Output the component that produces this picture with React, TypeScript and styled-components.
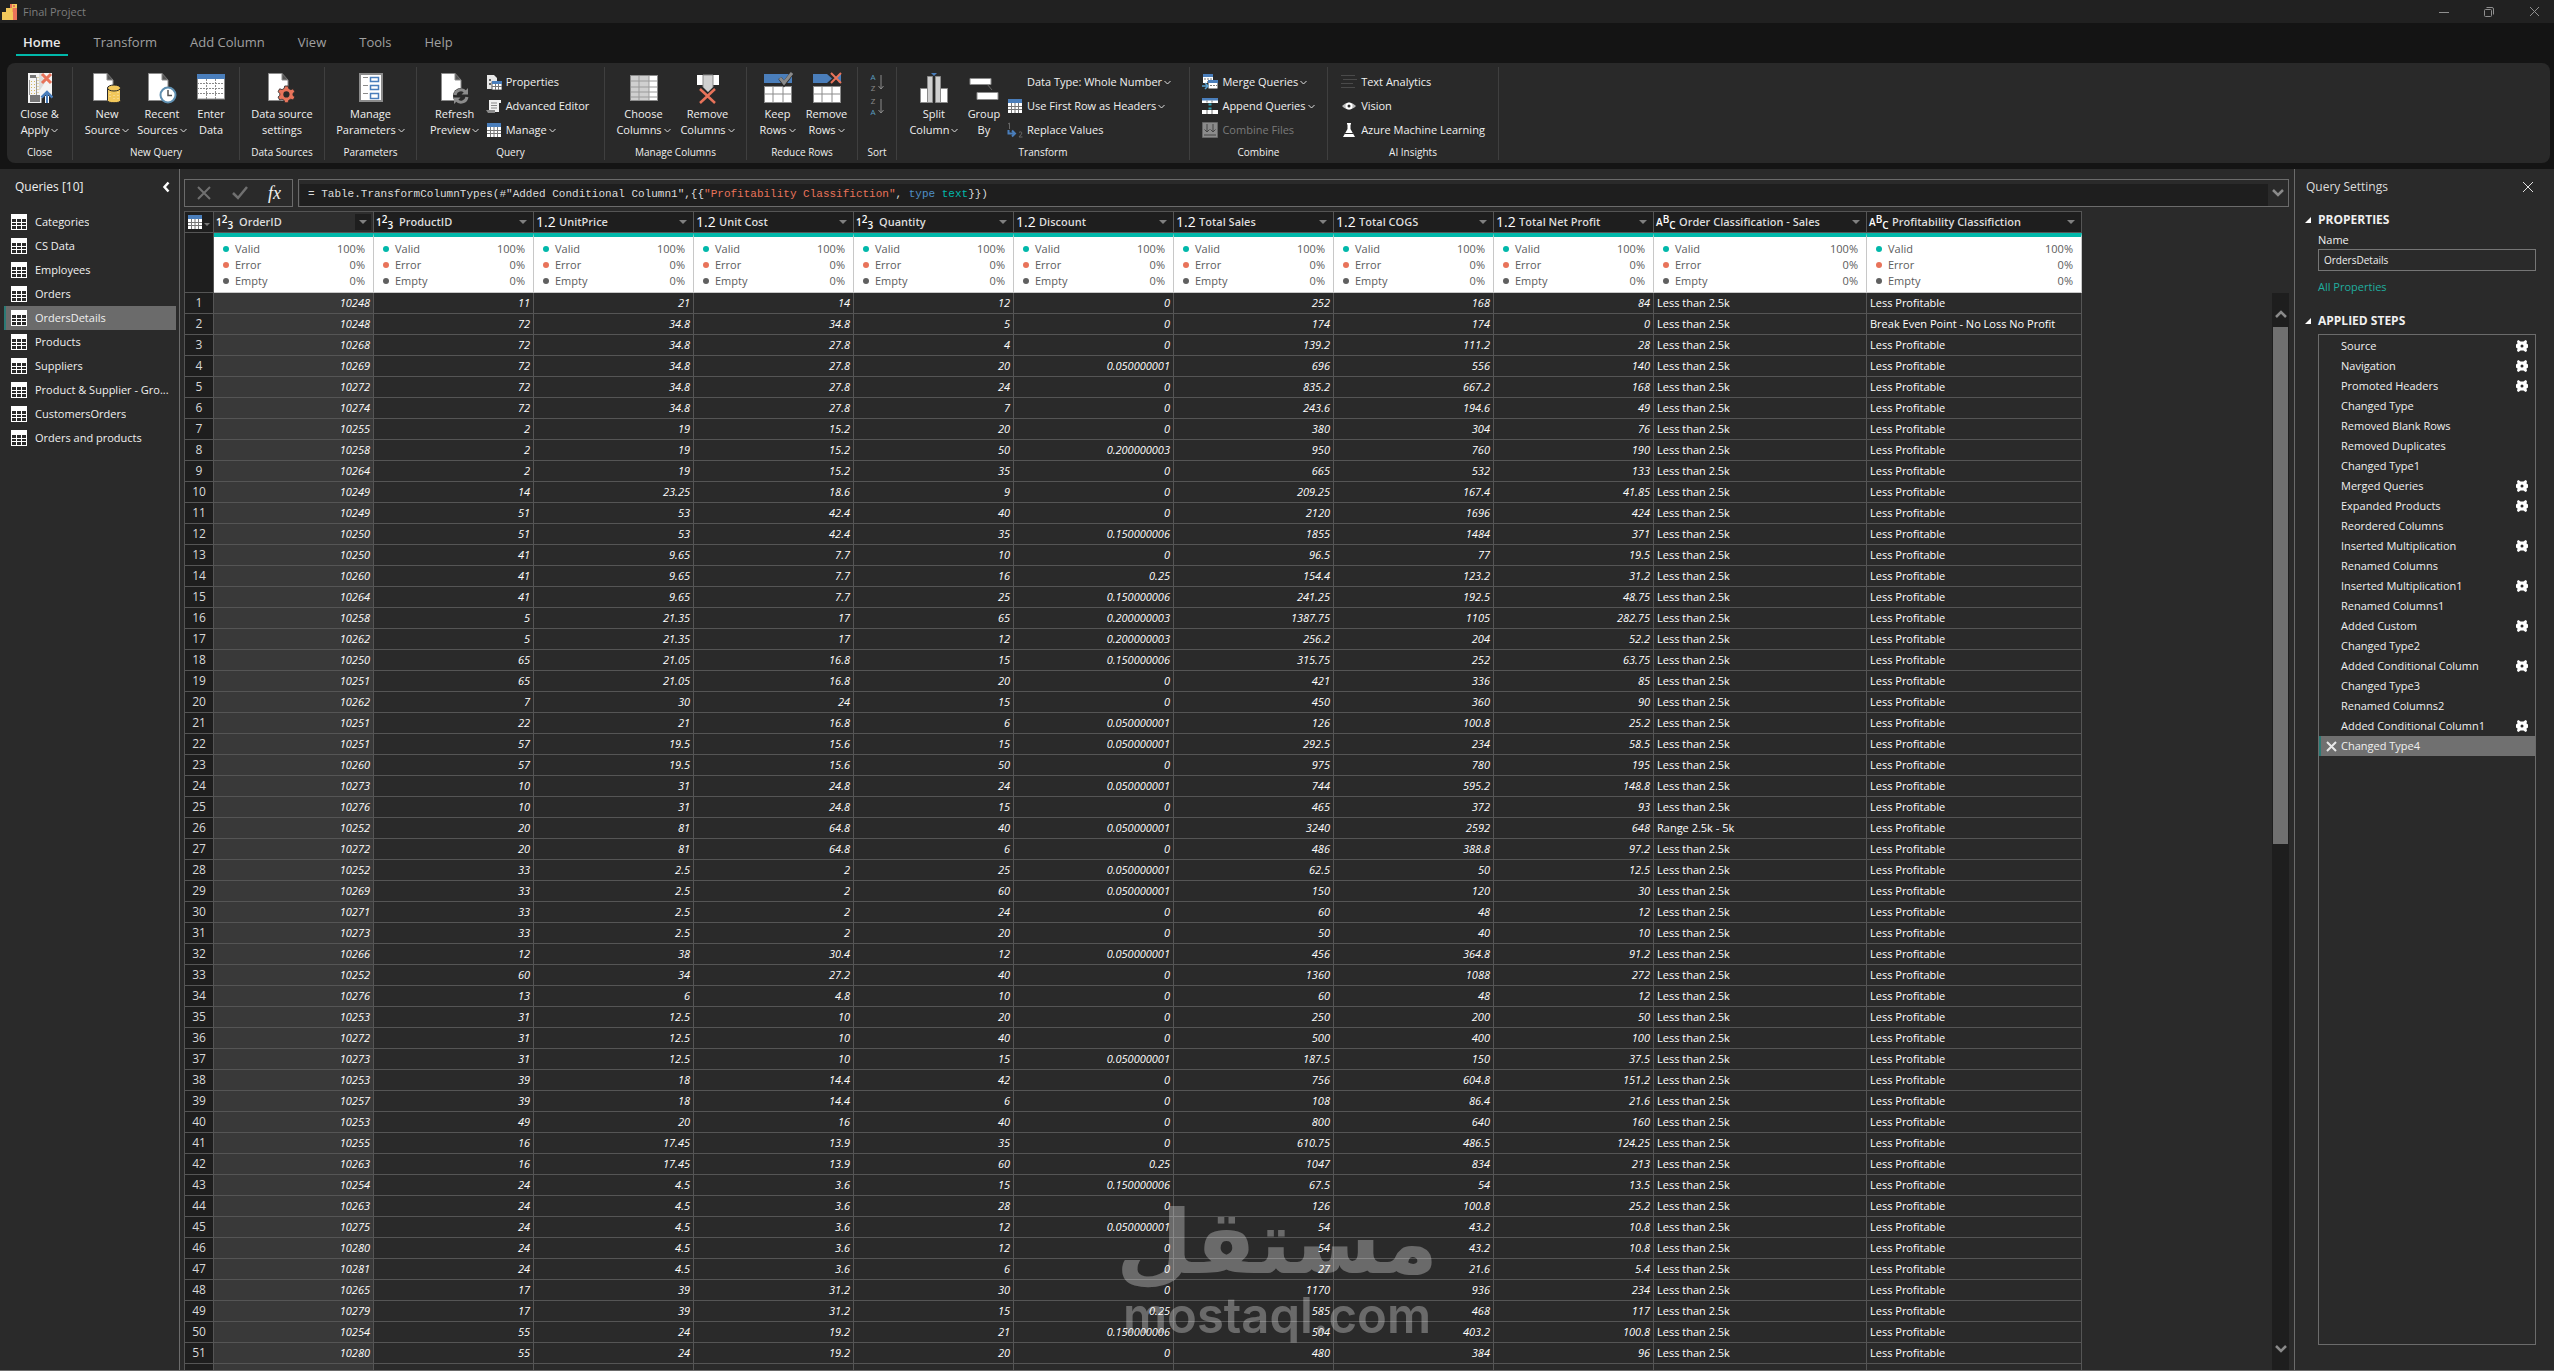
import React from "react";
import styled, { createGlobalStyle } from "styled-components";

const c = {
  title: "#212121",
  strip: "#141414",
  panel: "#2a2a2a",
  dark: "#1e1e1e",
  line: "#555555",
  edge: "#6b6b6b",
  picked: "#6b6b6b",
  teal: "#01b8aa",
  blue: "#4a7ebb",
  red: "#e8735a",
  gold: "#f2c85b",
  text: "#f0f0f0",
};

const Global = createGlobalStyle`
  * { box-sizing: border-box; }
  body { margin: 0; background: ${c.panel}; color: ${c.text}; font: 12px/16px "Open Sans", "Noto Sans", sans-serif; }
  button { font: inherit; color: inherit; background: none; border: 0; padding: 0; margin: 0; }
  input { font: inherit; color: inherit; }
  ul, ol { list-style: none; margin: 0; padding: 0; }
  svg { display: block; flex: none; }
`;

/* ---------- frame ---------- */

const Shell = styled.div`
  height: 100vh;
  display: flex;
  flex-direction: column;
  overflow: hidden;
  position: relative;
`;
const TitleBar = styled.header`
  height: 23px;
  background: ${c.title};
  color: #7d7d7d;
  display: flex;
  align-items: center;
  padding: 0 14px 0 2px;
  gap: 6px;
`;
const TitleText = styled.span`
  flex: 1;
  font-size: 11px;
`;
const WindowButtons = styled.div`
  display: flex;
  gap: 35px;
`;
const Tabs = styled.nav`
  background: ${c.strip};
  height: 40px;
  padding: 6px 16px 0;
  display: flex;
  align-items: flex-start;
  gap: 19px;
`;
const Tab = styled.button<{ $on?: boolean }>`
  height: 25px;
  padding: 0 7px;
  font-size: 13px;
  line-height: 26px;
  color: ${(p) => (p.$on ? "#e8e8e8" : "#a0a0a0")};
  font-weight: ${(p) => (p.$on ? 600 : 400)};
  box-shadow: ${(p) => (p.$on ? `0 2px 0 ${c.teal}` : "none")};
`;
const RibbonBack = styled.div`
  background: ${c.strip};
  padding: 0 4px 6px 7px;
`;
const Ribbon = styled.div`
  height: 100px;
  background: #292929;
  border-radius: 8px;
  display: flex;
  padding: 4px 0 3px;
`;
const Group = styled.section<{ $w: number }>`
  width: ${(p) => p.$w}px;
  border-right: 1px solid #3f3f3f;
  display: flex;
  flex-direction: column;
  justify-content: space-between;
`;
const GroupTools = styled.div<{ $mixed?: boolean }>`
  display: flex;
  justify-content: center;
  align-items: flex-start;
  padding-top: 3px;
  padding-right: ${(p) => (p.$mixed ? 8 : 0)}px;
`;
const GroupName = styled.div`
  text-align: center;
  font-size: 10px;
  line-height: 16px;
`;
const Big = styled.button<{ $w: number }>`
  width: ${(p) => p.$w}px;
  display: flex;
  flex-direction: column;
  align-items: center;
  font-size: 11px;
  line-height: 16px;
  white-space: nowrap;
`;
const BigIcon = styled.span`
  height: 36px;
  display: flex;
  align-items: center;
`;
const BigLine = styled.span`
  display: flex;
  align-items: center;
  gap: 2px;
`;
const SmallList = styled.div`
  display: flex;
  flex-direction: column;
`;
const Small = styled.button<{ $off?: boolean }>`
  height: 24px;
  display: flex;
  align-items: center;
  gap: 2px;
  font-size: 11px;
  white-space: nowrap;
  color: ${(p) => (p.$off ? "#7a7a7a" : c.text)};
`;
const SmallIcon = styled.span`
  width: 16px;
  margin-right: 2px;
  display: flex;
  justify-content: center;
`;
const SortMark = styled.span`
  display: flex;
  align-items: center;
  gap: 2px;
`;
const SortLetters = styled.span`
  display: flex;
  flex-direction: column;
  font-size: 8px;
  line-height: 11px;
`;

const Body = styled.div`
  flex: 1;
  min-height: 0;
  display: grid;
  grid-template-columns: 180px minmax(0, 1fr) 260px;
  border-bottom: 1px solid ${c.edge};
`;

/* ---------- queries pane ---------- */

const Queries = styled.aside`
  border-right: 1px solid ${c.edge};
`;
const QueriesHead = styled.div`
  height: 36px;
  padding: 0 9px 0 15px;
  display: flex;
  align-items: center;
  justify-content: space-between;
  font-size: 12px;
`;
const QueryList = styled.ul`
  padding: 5px 3px 0 4px;
`;
const QueryRow = styled.button<{ $on?: boolean }>`
  width: 100%;
  height: 24px;
  display: flex;
  align-items: center;
  gap: 8px;
  padding: 0 0 0 5px;
  border-left: 2px solid ${(p) => (p.$on ? "#2b7a75" : "transparent")};
  background: ${(p) => (p.$on ? c.picked : "transparent")};
  font-size: 11px;
  text-align: left;
`;
const QueryName = styled.span`
  overflow: hidden;
  white-space: nowrap;
  text-overflow: ellipsis;
`;

/* ---------- centre ---------- */

const Main = styled.main`
  min-height: 0;
  display: flex;
  flex-direction: column;
  padding: 10px 5px 0 4px;
`;
const FormulaRow = styled.div`
  display: flex;
  gap: 5px;
  height: 28px;
`;
const FormulaTools = styled.div`
  width: 109px;
  border: 1px solid ${c.edge};
  display: flex;
  align-items: center;
  justify-content: space-between;
  padding: 0 11px 0 12px;
`;
const Fx = styled.button`
  font: italic 18px/20px "Liberation Serif", serif;
`;
const FormulaBox = styled.div`
  flex: 1;
  min-width: 0;
  border: 1px solid ${c.edge};
  padding: 4px 0 0 1px;
  display: flex;
`;
const Formula = styled.div`
  flex: 1;
  background: ${c.dark};
  padding: 0 8px;
  font: 11px/20px "Liberation Mono", monospace;
  color: #dcdcdc;
  white-space: pre;
  overflow: hidden;
`;
const Tok = styled.span<{ $c: string }>`
  color: ${(p) => p.$c};
`;
const FormulaDrop = styled.button`
  width: 20px;
  height: 18px;
  display: flex;
  align-items: center;
  justify-content: center;
`;
const GridArea = styled.div`
  flex: 1;
  min-height: 0;
  margin-top: 4px;
  display: flex;
`;
const GridClip = styled.div`
  flex: 1;
  min-width: 0;
  overflow: hidden;
`;
const Table = styled.table`
  table-layout: fixed;
  border-collapse: separate;
  border-spacing: 0;
  width: 1898px;
  border-left: 1px solid ${c.line};
`;
const HeadCell = styled.th<{ $on?: boolean }>`
  height: 22px;
  padding: 0 2px;
  border: solid ${c.line};
  border-width: 1px 1px 1px 0;
  background: ${(p) => (p.$on ? "#2e2e2e" : c.dark)};
  text-align: left;
  font-size: 11px;
  font-weight: 600;
  line-height: 16px;
  overflow: hidden;
`;
const HeadFlex = styled.div`
  display: flex;
  align-items: center;
`;
const TypeMark = styled.span`
  width: 23px;
  height: 18px;
  display: flex;
  align-items: center;
  font-size: 10px;
  line-height: 12px;
  color: #ffffff;
`;
const TypeNum = styled(TypeMark)`
  font-size: 14px;
  font-weight: 400;
`;
const Up = styled.span`
  align-self: flex-start;
`;
const Down = styled.span`
  align-self: flex-end;
`;
const HeadName = styled.span`
  flex: 1;
  white-space: nowrap;
  color: #dcdcdc;
`;
const HeadDrop = styled.button<{ $on?: boolean }>`
  width: 16px;
  height: 16px;
  display: flex;
  align-items: center;
  justify-content: center;
  background: ${(p) => (p.$on ? c.dark : "transparent")};
`;
const Corner = styled.td`
  background: ${c.dark};
  border-right: 1px solid ${c.line};
  border-bottom: 1px solid ${c.line};
`;
const QualityCell = styled.td`
  height: 60px;
  padding: 4px 8px 0 9px;
  background: #ffffff;
  border-top: 4px solid ${c.teal};
  border-right: 1px solid #c8c8c8;
  border-bottom: 1px solid #c8c8c8;
  color: #5c5c5c;
  font-size: 11px;
  line-height: 16px;
  vertical-align: top;
`;
const QualityLine = styled.div`
  display: flex;
  align-items: center;
  gap: 6px;
`;
const Dot = styled.i<{ $c: string }>`
  width: 6px;
  height: 6px;
  border-radius: 3px;
  background: ${(p) => p.$c};
`;
const Grow = styled.span`
  flex: 1;
`;
const RowNo = styled.th`
  height: 21px;
  padding: 0;
  background: ${c.dark};
  border-right: 1px solid ${c.line};
  border-bottom: 1px solid ${c.line};
  font-size: 12px;
  line-height: 20px;
  font-weight: 400;
  color: #d8d8d8;
  text-align: center;
`;
const Cell = styled.td<{ $num?: boolean; $on?: boolean }>`
  height: 21px;
  padding: 0 3px;
  border-right: 1px solid ${c.line};
  border-bottom: 1px solid ${c.line};
  background: ${(p) => (p.$on ? "#393939" : "transparent")};
  font-size: 11px;
  line-height: 20px;
  font-style: ${(p) => (p.$num ? "italic" : "normal")};
  text-align: ${(p) => (p.$num ? "right" : "left")};
  color: #ffffff;
  white-space: nowrap;
`;
const ScrollTrack = styled.div`
  width: 17px;
  margin-top: 82px;
  background: ${c.dark};
  display: flex;
  flex-direction: column;
  align-items: center;
`;
const ScrollEnd = styled.button<{ $down?: boolean }>`
  height: 34px;
  padding: ${(p) => (p.$down ? "0 0 8px" : "8px 0 0")};
  display: flex;
  align-items: center;
`;
const ScrollThumb = styled.div`
  width: 15px;
  flex: 516;
  background: #707070;
`;
const ScrollRest = styled.div`
  flex: 492;
`;

/* ---------- settings pane ---------- */

const Settings = styled.aside`
  border-left: 1px solid ${c.edge};
  padding: 0 18px 25px 10px;
  display: flex;
  flex-direction: column;
`;
const SettingsHead = styled.div`
  height: 36px;
  display: flex;
  align-items: center;
  justify-content: space-between;
  padding: 0 2px 0 1px;
  font-size: 12px;
  color: #dcdcdc;
`;
const SectionHead = styled.h2`
  margin: 7px 0 0;
  height: 16px;
  display: flex;
  align-items: center;
  gap: 7px;
  font-size: 12px;
  font-weight: 700;
`;
const Inset = styled.div`
  padding-left: 13px;
  padding-top: 4px;
  display: flex;
  flex-direction: column;
  align-items: flex-start;
`;
const FieldLabel = styled.label`
  font-size: 11px;
  line-height: 16px;
  margin-bottom: 1px;
`;
const NameInput = styled.input`
  width: 100%;
  height: 22px;
  background: transparent;
  border: 1px solid #757575;
  border-radius: 0;
  padding: 0 5px;
  font-size: 10px;
`;
const AllLink = styled.a`
  margin: 8px 0 11px;
  font-size: 11px;
  line-height: 16px;
  color: #1fae9f;
  text-decoration: none;
`;
const Steps = styled.ol`
  flex: 1;
  margin: 5px 0 0 13px;
  border: 1px solid ${c.edge};
  padding-top: 1px;
`;
const Step = styled.li<{ $on?: boolean }>`
  height: 20px;
  display: flex;
  align-items: center;
  padding-right: 7px;
  border-left: 2px solid ${(p) => (p.$on ? "#2b7a75" : "transparent")};
  background: ${(p) => (p.$on ? "#707070" : "transparent")};
`;
const StepMark = styled.button`
  width: 20px;
  display: flex;
  justify-content: center;
`;
const StepName = styled.button`
  flex: 1;
  text-align: left;
  font-size: 11px;
  line-height: 20px;
`;

/* ---------- watermark ---------- */

const Watermark = styled.div`
  position: absolute;
  left: 0;
  right: 0;
  bottom: 30px;
  display: flex;
  flex-direction: column;
  align-items: center;
  opacity: 0.3;
  color: #ffffff;
  pointer-events: none;
`;
const MarkArabic = styled.div`
  font: bold 88px/96px "DejaVu Sans", sans-serif;
`;
const MarkLatin = styled.div`
  font: 600 49px/50px "Inter", sans-serif;
`;

/* ---------- drawings ---------- */

const Chevron = () => (
  <svg width="7" height="5" viewBox="0 0 7 5" fill="none" stroke="#e0e0e0">
    <path d="M.5 1l3 3 3-3" />
  </svg>
);
const Fat = ({ d, w = 12, h = 8, s = "#8a8a8a" }: { d: string; w?: number; h?: number; s?: string }) => (
  <svg width={w} height={h} viewBox={`0 0 ${w} ${h}`} fill="none" stroke={s} strokeWidth="2.5">
    <path d={d} />
  </svg>
);
const Logo = () => (
  <svg width="15" height="16" viewBox="0 0 15 16">
    <rect x="8" y="0" width="7" height="16" fill={c.red} />
    <rect x="4" y="4" width="7" height="12" fill="#f0a94e" />
    <rect x="0" y="8" width="11" height="8" fill={c.gold} />
    <rect x="4" y="4" width="6" height="8" fill={c.gold} />
    <rect x="10" y="0" width="5" height="4" fill={c.gold} />
    <rect x="11" y="1" width="2" height="2" fill={c.red} />
  </svg>
);
const Doc = () => <path d="M1.5 1.5H15l6 6.500V28.500H1.500z" fill="#fff" stroke="#8b8b8b" />;
const Fold = () => <path d="M15 1.500V8h6" fill="#555" stroke="#8b8b8b" />;
const B = ({ children, w = 30 }: { children: React.ReactNode; w?: number }) => (
  <svg width={w} height="32" viewBox={`0 0 ${w} 32`} fill="none">
    {children}
  </svg>
);
const lines = (xs: number[], ys: number[], x0: number, x1: number, y0: number, y1: number, s = "#8b8b8b") => (
  <path
    stroke={s}
    d={xs.map((x) => `M${x} ${y0}V${y1}`).join("") + ys.map((y) => `M${x0} ${y}H${x1}`).join("")}
  />
);
const gearPath =
  "M4.800 0h2.400l.4 1.700 1.500.9 1.700-.6 1.200 2.100-1.300 1.200v1.400l1.300 1.200-1.200 2.100-1.700-.6-1.500.9-.4 1.700H4.800l-.4-1.700-1.500-.9-1.700.6L0 7.900l1.300-1.200V5.300L0 4.100 1.200 2l1.700.6 1.500-.9z";
const starGearPath = "M2.500 0l2 1.500h3L9.500 0l1.500 1-.5 2.500L12 4.500v3l-1.500 1 .5 2.500-1.500 1-2-1.500h-3L2.500 12 1 11l.5-2.500L0 7.500v-3l1.500-1L1 1z";

const BigIcons: Record<string, React.ReactNode> = {
  close: (
    <B w={26}>
      <rect x="1" y="1" width="24" height="30" fill="#f4f4f4" />
      <path d="M12 1h3v4l4 4-6 9h-1z" fill="#dcdcdc" />
      <path d="M4.500 9v14M7.500 9v14M11 5v18" stroke="#d4b95e" strokeDasharray="1 2" />
      <path d="M2.500 8v15M9.500 5v18" stroke="#9a9a9a" />
      <rect x="3" y="3" width="6" height="3" fill="#777" />
      <rect x="3" y="23" width="10" height="7" fill="#777" />
      <path d="M15 2l9 9M24 2l-9 9" stroke={c.red} strokeWidth="3" />
      <path d="M14.500 26v5h11v-5L20 20z" fill="#292929" />
      <path d="M14.500 25.500L20 20l5.500 5.500" stroke={c.blue} strokeWidth="2.500" />
      <path d="M18 24h4v7h-4z" fill="#fff" />
      <path d="M20 20v11" stroke={c.blue} strokeWidth="2" />
    </B>
  ),
  source: (
    <B>
      <Doc />
      <Fold />
      <path d="M15.500 16v12.500c0 3 13 3 13 0V16z" fill={c.gold} stroke="#292929" />
      <ellipse cx="22" cy="16" rx="6.500" ry="3" fill={c.gold} stroke="#292929" />
      <path d="M18 21v6M22 23v6M26 20v7" stroke="#fff" strokeDasharray="1 2" opacity=".6" />
    </B>
  ),
  recent: (
    <B>
      <Doc />
      <Fold />
      <circle cx="21" cy="23" r="7.500" fill="#fff" stroke="#5f8fb0" strokeWidth="2" />
      <path d="M21 18v5.500h4" stroke="#555" strokeWidth="1.500" />
    </B>
  ),
  enter: (
    <B>
      <rect x="1.500" y="3" width="27" height="24" fill="#fff" stroke="#8b8b8b" />
      <rect x="1" y="2" width="28" height="5" fill={c.blue} />
      <path
        stroke="#8b8b8b"
        strokeDasharray="2 1"
        d="M10.500 7v20M19.500 7v20M1 11.500h28M1 16.500h28M1 21.500h28"
      />
    </B>
  ),
  settings: (
    <B>
      <Doc />
      <Fold />
      <g transform="translate(11 14) scale(1.400)">
        <path d={gearPath} fill={c.red} stroke="#292929" strokeWidth=".6" />
        <circle cx="6" cy="6" r="2.200" fill="#292929" />
      </g>
    </B>
  ),
  params: (
    <B w={24}>
      <rect x="1" y="2" width="22" height="27" fill="#fff" stroke="#8b8b8b" strokeWidth="2" />
      <path d="M4 5.500h5M4 13.500h5M4 21.500h5" stroke="#8b8b8b" />
      <path d="M11.500 5.500h8v4h-8zM11.500 13.500h8v4h-8zM11.500 21.500h8v5h-8z" stroke={c.blue} strokeWidth="1.500" />
    </B>
  ),
  refresh: (
    <B>
      <Doc />
      <Fold />
      <circle cx="21" cy="24" r="8" fill="#292929" />
      <path d="M15 23a6 6 0 0 1 10.500-3M27 25a6 6 0 0 1-10.500 3" stroke="#8b8b8b" strokeWidth="3" />
      <path d="M28 16v6.500h-6.500zM14 32v-6.500h6.500z" fill="#8b8b8b" />
    </B>
  ),
  choose: (
    <B>
      <rect x="1" y="3" width="28" height="26" fill="#d0d0d0" />
      <rect x="20" y="3" width="9" height="26" fill="#fff" />
      {lines([10, 20], [9, 15, 20, 25], 1, 29, 3, 29, "#9a9a9a")}
      <rect x="1.500" y="3.500" width="27" height="25" stroke="#8b8b8b" />
    </B>
  ),
  removeCols: (
    <B w={24}>
      <path d="M1 3h6v10H1zM17 3h6v10h-6z" fill="#fff" />
      <path d="M7 3h10v12l-5 5-5-5z" fill="#d0d0d0" stroke="#8b8b8b" />
      <path d="M4 17l15 14M19 17L4 31" stroke={c.red} strokeWidth="2.500" />
    </B>
  ),
  keep: (
    <B>
      <rect x="1" y="2" width="28" height="9" fill={c.blue} />
      <rect x="1.500" y="14.500" width="27" height="16" fill="#fff" stroke="#8b8b8b" />
      {lines([10, 20], [22], 1, 29, 14, 31)}
      <path d="M17 6l4 6 8-11" stroke="#292929" strokeWidth="4" />
      <path d="M17 6l4 5 8-10" stroke="#8b8b8b" strokeWidth="3" />
    </B>
  ),
  removeRows: (
    <B>
      <path d="M1 2h14l5 4.500-5 4.500H1z" fill={c.blue} />
      <path d="M27 2h2v9h-2l-2-4.500z" fill={c.blue} />
      <rect x="1.500" y="14.500" width="27" height="16" fill="#fff" stroke="#8b8b8b" />
      {lines([10, 20], [22], 1, 29, 14, 31)}
      <path d="M19 1l10 10M29 1L19 11" stroke={c.red} strokeWidth="2" />
    </B>
  ),
  split: (
    <B>
      <path d="M12 1h6l-3 3z" fill={c.blue} />
      <path d="M1.500 16.500h7v14h-7zM21.500 16.500h7v14h-7z" fill="#fff" stroke="#8b8b8b" />
      <path d="M8.500 4.500h5v26h-5zM16.500 4.500h5v26h-5z" fill="#d0d0d0" stroke="#8b8b8b" />
    </B>
  ),
  group: (
    <B>
      <path d="M18 12l5 6" stroke="#666" />
      <path d="M1 6.500h21v6H1zM8 20.500h21v7H8z" fill="#fff" stroke="#8b8b8b" />
    </B>
  ),
};

const S = ({ children }: { children?: React.ReactNode }) => (
  <svg width="16" height="16" viewBox="0 0 16 16" fill="none">
    {children}
  </svg>
);
const MiniTable = () => (
  <S>
    <rect x="1" y="1" width="14" height="14" fill="#fff" />
    <rect x="1" y="1" width="14" height="4" fill={c.blue} />
    {lines([4.5, 8, 11.5], [8.500, 11.500], 1, 15, 5, 15, "#777")}
  </S>
);
const SmallIcons: Record<string, React.ReactNode> = {
  none: <S />,
  table: <MiniTable />,
  props: (
    <S>
      <path d="M1 1h7l3 3v11H1z" fill="#e8e8e8" />
      <path d="M3 6h2M3 10h2" stroke="#666" strokeWidth="2" />
      <rect x="6" y="8" width="10" height="8" fill="#fff" stroke="#555" />
      <rect x="6" y="7" width="10" height="3" fill={c.blue} />
      {lines([9.5, 12.500], [12.500], 6, 16, 10, 16, "#777")}
    </S>
  ),
  script: (
    <S>
      <path d="M3 2h12v3h-2v9H3z" fill="#f0f0f0" />
      <path d="M5 5h6M5 7.500h6M5 10h6" stroke="#888" />
      <path d="M0 12h9v3H2z" fill="#8b8b8b" />
    </S>
  ),
  replace: (
    <S>
      <path d="M1 2l1.500-1v6" stroke="#666" />
      <path d="M12 10.500c2-1.500 3.500 0 2.500 1.500l-2.500 3h3.500" stroke="#666" />
      <path d="M1.500 8v3.500H7M5 8.500l3 3-3 3" stroke={c.blue} strokeWidth="2" />
    </S>
  ),
  merge: (
    <S>
      <path d="M1 1h10v8H1z" fill="#fff" />
      <path d="M1 0h10v3H1z" fill={c.blue} />
      <path d="M6 7h10v8H6z" fill="#fff" stroke="#292929" />
      <path d="M6 6h10v3H6z" fill={c.blue} />
      <path d="M2 5h8M8 11.500h7" stroke="#777" strokeDasharray="2 1" />
      <path d="M0 12h5M3 9l3 3-3 3" stroke="#5aa0d0" strokeWidth="1.500" />
    </S>
  ),
  append: (
    <S>
      <path d="M0 0h16v5H0zM0 12h16v4H0z" fill="#fff" />
      <path d="M0 0h16v2.500H0z" fill={c.blue} />
      <path d="M5 2.500v2M10 2.500v2M5 12v4M10 12v4" stroke="#777" />
      <path d="M8 5.500v2M8 9.500v2" stroke="#2e9bb0" strokeWidth="3" />
    </S>
  ),
  combine: (
    <S>
      <path d="M.500.500h15v15H.500z" fill="#8b8b8b" stroke="#666" />
      <path d="M5 2v8M11 2v8M2.500 7.500L5 10l2.500-2.500M8.500 7.500L11 10l2.500-2.500M2 13h12" stroke="#444" />
    </S>
  ),
  text: (
    <S>
      <path d="M0 1.500h14M2 5.500h14M0 9.500h12M0 13.500h14" stroke="#4a4a4a" />
    </S>
  ),
  eye: (
    <S>
      <path d="M1 8c4-4.500 10-4.500 14 0-4 4.500-10 4.500-14 0z" fill="#bbb" />
      <circle cx="8" cy="8" r="3.500" fill="#fff" />
      <circle cx="8" cy="8" r="1.500" fill="#292929" />
    </S>
  ),
  flask: (
    <S>
      <path d="M6 1h4v1.500H9.500V7L14 15H2l4.500-8V2.500H6z" fill="#fff" />
      <path d="M4 11.500h8" stroke="#292929" />
    </S>
  ),
};
const SortIcon = ({ a, b }: { a: string; b: string }) => {
  const tint = (l: string) => (l === "A" ? "#5a9fc0" : "#8b8b8b");
  return (
    <SortMark>
      <SortLetters>
        <Tok $c={tint(a)}>{a}</Tok>
        <Tok $c={tint(b)}>{b}</Tok>
      </SortLetters>
      <svg width="6" height="16" viewBox="0 0 6 16">
        <path d="M3 1v14M.5 12L3 15l2.500-3" stroke="#8b8b8b" fill="none" />
      </svg>
    </SortMark>
  );
};
const QueryIcon = () => (
  <svg width="16" height="16" viewBox="0 0 16 16">
    <rect width="16" height="16" fill="#fff" />
    <path
      fill={c.panel}
      d="M1 5h4v3H1zM6 5h4v3H6zM11 5h4v3h-4zM1 9h4v2H1zM6 9h4v2H6zM11 9h4v2h-4zM1 12h4v3H1zM6 12h4v3H6zM11 12h4v3h-4z"
    />
  </svg>
);
const Gear = () => (
  <svg width="12" height="12" viewBox="0 0 12 12">
    <path fillRule="evenodd" d={starGearPath + "M6 4.500a1.500 1.500 0 1 0 0 3 1.500 1.500 0 0 0 0-3z"} fill="#fff" />
  </svg>
);
const Cross = ({ n, w = 1, s = "#8f8f8f" }: { n: number; w?: number; s?: string }) => (
  <svg width={n} height={n} viewBox={`0 0 ${n} ${n}`} stroke={s} strokeWidth={w}>
    <path d={`M1 1L${n - 1} ${n - 1}M${n - 1} 1L1 ${n - 1}`} />
  </svg>
);
const Twisty = () => (
  <svg width="6" height="6" viewBox="0 0 6 6">
    <path d="M6 0v6H0z" fill="#fff" />
  </svg>
);

/* ---------- data ---------- */

type Tool = { icon: string; lines: string[]; drop?: boolean; w: number };
type Mini = { icon: string; label: string; drop?: boolean; off?: boolean };
type RibbonGroup = { name: string; w: number; big?: Tool[]; small?: Mini[]; sort?: boolean };

const groups: RibbonGroup[] = [
  { name: "Close", w: 66, big: [{ icon: "close", lines: ["Close &", "Apply"], drop: true, w: 60 }] },
  {
    name: "New Query",
    w: 167,
    big: [
      { icon: "source", lines: ["New", "Source"], drop: true, w: 54 },
      { icon: "recent", lines: ["Recent", "Sources"], drop: true, w: 56 },
      { icon: "enter", lines: ["Enter", "Data"], w: 42 },
    ],
  },
  { name: "Data Sources", w: 85, big: [{ icon: "settings", lines: ["Data source", "settings"], w: 80 }] },
  { name: "Parameters", w: 92, big: [{ icon: "params", lines: ["Manage", "Parameters"], drop: true, w: 88 }] },
  {
    name: "Query",
    w: 188,
    big: [{ icon: "refresh", lines: ["Refresh", "Preview"], drop: true, w: 62 }],
    small: [
      { icon: "props", label: "Properties" },
      { icon: "script", label: "Advanced Editor" },
      { icon: "table", label: "Manage", drop: true },
    ],
  },
  {
    name: "Manage Columns",
    w: 142,
    big: [
      { icon: "choose", lines: ["Choose", "Columns"], drop: true, w: 64 },
      { icon: "removeCols", lines: ["Remove", "Columns"], drop: true, w: 64 },
    ],
  },
  {
    name: "Reduce Rows",
    w: 111,
    big: [
      { icon: "keep", lines: ["Keep", "Rows"], drop: true, w: 49 },
      { icon: "removeRows", lines: ["Remove", "Rows"], drop: true, w: 49 },
    ],
  },
  { name: "Sort", w: 39, sort: true },
  {
    name: "Transform",
    w: 293,
    big: [
      { icon: "split", lines: ["Split", "Column"], drop: true, w: 54 },
      { icon: "group", lines: ["Group", "By"], w: 46 },
    ],
    small: [
      { icon: "none", label: "Data Type: Whole Number", drop: true },
      { icon: "table", label: "Use First Row as Headers", drop: true },
      { icon: "replace", label: "Replace Values" },
    ],
  },
  {
    name: "Combine",
    w: 138,
    small: [
      { icon: "merge", label: "Merge Queries", drop: true },
      { icon: "append", label: "Append Queries", drop: true },
      { icon: "combine", label: "Combine Files", off: true },
    ],
  },
  {
    name: "AI Insights",
    w: 171,
    small: [
      { icon: "text", label: "Text Analytics" },
      { icon: "eye", label: "Vision" },
      { icon: "flask", label: "Azure Machine Learning" },
    ],
  },
];

const queries = [
  "Categories", "CS Data", "Employees", "Orders", "OrdersDetails", "Products", "Suppliers",
  "Product & Supplier - Gro...", "CustomersOrders", "Orders and products",
];

const columns: { name: string; type: "int" | "dec" | "abc"; w: number }[] = [
  { name: "OrderID", type: "int", w: 160 },
  { name: "ProductID", type: "int", w: 160 },
  { name: "UnitPrice", type: "dec", w: 160 },
  { name: "Unit Cost", type: "dec", w: 160 },
  { name: "Quantity", type: "int", w: 160 },
  { name: "Discount", type: "dec", w: 160 },
  { name: "Total Sales", type: "dec", w: 160 },
  { name: "Total COGS", type: "dec", w: 160 },
  { name: "Total Net Profit", type: "dec", w: 160 },
  { name: "Order Classification - Sales", type: "abc", w: 213 },
  { name: "Profitability Classifiction", type: "abc", w: 215 },
];

const rows = `10248 11 21 14 12 0 252 168 84
10248 72 34.8 34.8 5 0 174 174 0
10268 72 34.8 27.8 4 0 139.2 111.2 28
10269 72 34.8 27.8 20 0.050000001 696 556 140
10272 72 34.8 27.8 24 0 835.2 667.2 168
10274 72 34.8 27.8 7 0 243.6 194.6 49
10255 2 19 15.2 20 0 380 304 76
10258 2 19 15.2 50 0.200000003 950 760 190
10264 2 19 15.2 35 0 665 532 133
10249 14 23.25 18.6 9 0 209.25 167.4 41.85
10249 51 53 42.4 40 0 2120 1696 424
10250 51 53 42.4 35 0.150000006 1855 1484 371
10250 41 9.65 7.7 10 0 96.5 77 19.5
10260 41 9.65 7.7 16 0.25 154.4 123.2 31.2
10264 41 9.65 7.7 25 0.150000006 241.25 192.5 48.75
10258 5 21.35 17 65 0.200000003 1387.75 1105 282.75
10262 5 21.35 17 12 0.200000003 256.2 204 52.2
10250 65 21.05 16.8 15 0.150000006 315.75 252 63.75
10251 65 21.05 16.8 20 0 421 336 85
10262 7 30 24 15 0 450 360 90
10251 22 21 16.8 6 0.050000001 126 100.8 25.2
10251 57 19.5 15.6 15 0.050000001 292.5 234 58.5
10260 57 19.5 15.6 50 0 975 780 195
10273 10 31 24.8 24 0.050000001 744 595.2 148.8
10276 10 31 24.8 15 0 465 372 93
10252 20 81 64.8 40 0.050000001 3240 2592 648
10272 20 81 64.8 6 0 486 388.8 97.2
10252 33 2.5 2 25 0.050000001 62.5 50 12.5
10269 33 2.5 2 60 0.050000001 150 120 30
10271 33 2.5 2 24 0 60 48 12
10273 33 2.5 2 20 0 50 40 10
10266 12 38 30.4 12 0.050000001 456 364.8 91.2
10252 60 34 27.2 40 0 1360 1088 272
10276 13 6 4.8 10 0 60 48 12
10253 31 12.5 10 20 0 250 200 50
10272 31 12.5 10 40 0 500 400 100
10273 31 12.5 10 15 0.050000001 187.5 150 37.5
10253 39 18 14.4 42 0 756 604.8 151.2
10257 39 18 14.4 6 0 108 86.4 21.6
10253 49 20 16 40 0 800 640 160
10255 16 17.45 13.9 35 0 610.75 486.5 124.25
10263 16 17.45 13.9 60 0.25 1047 834 213
10254 24 4.5 3.6 15 0.150000006 67.5 54 13.5
10263 24 4.5 3.6 28 0 126 100.8 25.2
10275 24 4.5 3.6 12 0.050000001 54 43.2 10.8
10280 24 4.5 3.6 12 0 54 43.2 10.8
10281 24 4.5 3.6 6 0 27 21.6 5.4
10265 17 39 31.2 30 0 1170 936 234
10279 17 39 31.2 15 0.25 585 468 117
10254 55 24 19.2 21 0.150000006 504 403.2 100.8
10280 55 24 19.2 20 0 480 384 96`
  .split("\n")
  .map((r) => r.split(" "));

const sizeClass = (r: string[]) => (Number(r[6]) >= 2500 ? "Range 2.5k - 5k" : "Less than 2.5k");
const profitClass = (r: string[]) => (r[8] === "0" ? "Break Even Point - No Loss No Profit" : "Less Profitable");

const quality = [
  { name: "Valid", value: "100%", color: c.teal },
  { name: "Error", value: "0%", color: c.red },
  { name: "Empty", value: "0%", color: "#606060" },
];

const steps: [string, boolean?][] = [
  ["Source", true], ["Navigation", true], ["Promoted Headers", true], ["Changed Type"],
  ["Removed Blank Rows"], ["Removed Duplicates"], ["Changed Type1"], ["Merged Queries", true],
  ["Expanded Products", true], ["Reordered Columns"], ["Inserted Multiplication", true],
  ["Renamed Columns"], ["Inserted Multiplication1", true], ["Renamed Columns1"],
  ["Added Custom", true], ["Changed Type2"], ["Added Conditional Column", true],
  ["Changed Type3"], ["Renamed Columns2"], ["Added Conditional Column1", true], ["Changed Type4"],
];

const TypeIcon = ({ type }: { type: "int" | "dec" | "abc" }) => {
  if (type === "dec") return <TypeNum>1.2</TypeNum>;
  const [a, b, d] = type === "int" ? "123" : "ABC";
  return (
    <TypeMark>
      <span>{a}</span>
      <Up>{b}</Up>
      <Down>{d}</Down>
    </TypeMark>
  );
};

/* ---------- page ---------- */

export default function App() {
  return (
    <Shell>
      <Global />
      <TitleBar>
        <Logo />
        <TitleText>Final Project</TitleText>
        <WindowButtons>
          <button aria-label="Minimize">
            <svg width="10" height="10" viewBox="0 0 10 10" stroke="#8f8f8f"><path d="M0 5.500h10" /></svg>
          </button>
          <button aria-label="Restore">
            <svg width="10" height="10" viewBox="0 0 10 10" stroke="#8f8f8f" fill="none">
              <rect x=".5" y="2.500" width="7" height="7" rx="1" />
              <path d="M2.500.5H8a1.500 1.500 0 0 1 1.500 1.500v5.500" />
            </svg>
          </button>
          <button aria-label="Close"><Cross n={11} /></button>
        </WindowButtons>
      </TitleBar>

      <Tabs>
        {["Home", "Transform", "Add Column", "View", "Tools", "Help"].map((t, i) => (
          <Tab key={t} $on={i === 0}>{t}</Tab>
        ))}
      </Tabs>

      <RibbonBack>
        <Ribbon>
          {groups.map((g) => (
            <Group key={g.name} $w={g.w}>
              <GroupTools $mixed={!!g.big && !!g.small}>
                {g.big?.map((b) => (
                  <Big key={b.icon} $w={b.w}>
                    <BigIcon>{BigIcons[b.icon]}</BigIcon>
                    <span>{b.lines[0]}</span>
                    <BigLine>{b.lines[1]}{b.drop && <Chevron />}</BigLine>
                  </Big>
                ))}
                {g.small && (
                  <SmallList>
                    {g.small.map((s) => (
                      <Small key={s.label} $off={s.off} disabled={s.off}>
                        <SmallIcon>{SmallIcons[s.icon]}</SmallIcon>
                        {s.label}
                        {s.drop && <Chevron />}
                      </Small>
                    ))}
                  </SmallList>
                )}
                {g.sort && (
                  <SmallList>
                    <Small aria-label="Sort ascending"><SortIcon a="A" b="Z" /></Small>
                    <Small aria-label="Sort descending"><SortIcon a="Z" b="A" /></Small>
                  </SmallList>
                )}
              </GroupTools>
              <GroupName>{g.name}</GroupName>
            </Group>
          ))}
        </Ribbon>
      </RibbonBack>

      <Body>
        <Queries>
          <QueriesHead>
            <span>Queries [10]</span>
            <button aria-label="Collapse"><Fat w={8} h={12} d="M6.500 1.500L2.500 6l4 4.500" s="#fff" /></button>
          </QueriesHead>
          <QueryList>
            {queries.map((q) => (
              <li key={q}>
                <QueryRow $on={q === "OrdersDetails"}>
                  <QueryIcon />
                  <QueryName>{q}</QueryName>
                </QueryRow>
              </li>
            ))}
          </QueryList>
        </Queries>

        <Main>
          <FormulaRow>
            <FormulaTools>
              <button aria-label="Cancel"><Cross n={14} w={2} s="#707070" /></button>
              <button aria-label="Commit"><Fat w={16} h={14} d="M1 7l5 5L15 1" s="#707070" /></button>
              <Fx>fx</Fx>
            </FormulaTools>
            <FormulaBox>
              <Formula role="textbox" aria-label="Formula">
                {'= Table.TransformColumnTypes(#"Added Conditional Column1",{{'}
                <Tok $c={c.red}>"Profitability Classifiction"</Tok>{", "}
                <Tok $c="#4f8fc6">type</Tok> <Tok $c={c.teal}>text</Tok>
                {"}})"}
              </Formula>
              <FormulaDrop aria-label="Expand"><Fat d="M1 1l5 5 5-5" /></FormulaDrop>
            </FormulaBox>
          </FormulaRow>

          <GridArea>
            <GridClip>
              <Table>
                <colgroup>
                  <col style={{ width: 29 }} />
                  {columns.map((k) => <col key={k.name} style={{ width: k.w }} />)}
                </colgroup>
                <thead>
                  <tr>
                    <HeadCell aria-label="Table menu">
                      <HeadFlex>
                        <MiniTable />
                        <svg width="8" height="14" viewBox="0 0 8 14"><path d="M1 8h6l-3 3z" fill="#777" /></svg>
                      </HeadFlex>
                    </HeadCell>
                    {columns.map((k, i) => (
                      <HeadCell key={k.name} $on={i === 0}>
                        <HeadFlex>
                          <TypeIcon type={k.type} />
                          <HeadName>{k.name}</HeadName>
                          <HeadDrop $on={i === 0} aria-label={`Filter ${k.name}`}>
                            <svg width="8" height="4" viewBox="0 0 8 4"><path d="M0 0h8L4 4z" fill="#808080" /></svg>
                          </HeadDrop>
                        </HeadFlex>
                      </HeadCell>
                    ))}
                  </tr>
                </thead>
                <tbody>
                  <tr>
                    <Corner />
                    {columns.map((k) => (
                      <QualityCell key={k.name}>
                        {quality.map((q) => (
                          <QualityLine key={q.name}>
                            <Dot $c={q.color} />
                            <Grow>{q.name}</Grow>
                            <span>{q.value}</span>
                          </QualityLine>
                        ))}
                      </QualityCell>
                    ))}
                  </tr>
                  {rows.map((r, i) => (
                    <tr key={i}>
                      <RowNo>{i + 1}</RowNo>
                      {r.map((v, j) => <Cell key={j} $num $on={j === 0}>{v}</Cell>)}
                      <Cell>{sizeClass(r)}</Cell>
                      <Cell>{profitClass(r)}</Cell>
                    </tr>
                  ))}
                  <tr>
                    <RowNo />
                    {columns.map((k, j) => <Cell key={k.name} $on={j === 0} />)}
                  </tr>
                </tbody>
              </Table>
            </GridClip>
            <ScrollTrack>
              <ScrollEnd aria-label="Scroll up"><Fat d="M1 7l5-5 5 5" /></ScrollEnd>
              <ScrollThumb />
              <ScrollRest />
              <ScrollEnd $down aria-label="Scroll down"><Fat d="M1 1l5 5 5-5" /></ScrollEnd>
            </ScrollTrack>
          </GridArea>
        </Main>

        <Settings>
          <SettingsHead>
            <span>Query Settings</span>
            <button aria-label="Close settings"><Cross n={12} s="#e0e0e0" /></button>
          </SettingsHead>
          <SectionHead><Twisty />PROPERTIES</SectionHead>
          <Inset>
            <FieldLabel htmlFor="query-name">Name</FieldLabel>
            <NameInput id="query-name" defaultValue="OrdersDetails" />
            <AllLink href="#properties">All Properties</AllLink>
          </Inset>
          <SectionHead><Twisty />APPLIED STEPS</SectionHead>
          <Steps>
            {steps.map(([name, gear], i) => {
              const on = i === steps.length - 1;
              return (
                <Step key={name} $on={on}>
                  <StepMark aria-label={`Delete ${name}`}>{on && <Cross n={11} w={2} s="#e8e8e8" />}</StepMark>
                  <StepName>{name}</StepName>
                  {gear && <button aria-label={`Edit ${name}`}><Gear /></button>}
                </Step>
              );
            })}
          </Steps>
        </Settings>
      </Body>

      <Watermark>
        <MarkArabic lang="ar" dir="rtl">مستقل</MarkArabic>
        <MarkLatin>mostaql.com</MarkLatin>
      </Watermark>
    </Shell>
  );
}
